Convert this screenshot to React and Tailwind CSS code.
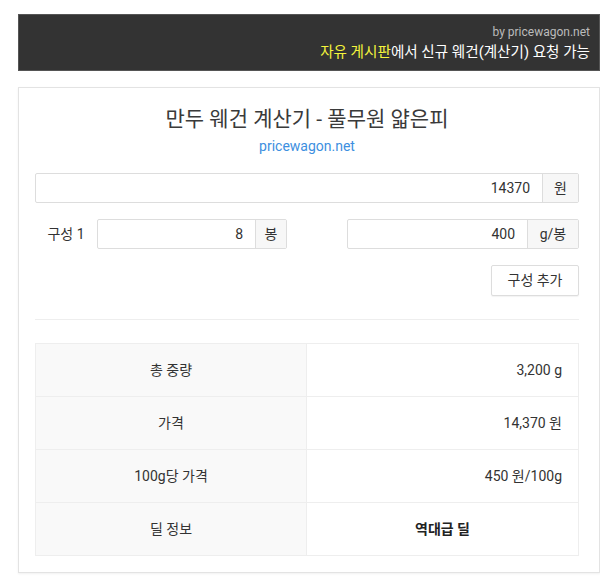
const font = { fontFamily: "Roboto, 'Noto Sans CJK KR', 'Noto Sans', sans-serif" };

function Row({ label, value, strong }) {
  return (
    <div className="flex h-[53px] border-t border-[#eeeeee] first:h-[52px] first:border-t-0">
      <div className="w-1/2 flex items-center justify-center bg-[#f9f9f9] border-r border-[#eeeeee] text-[14px] text-[#333]">
        {label}
      </div>
      <div
        className={`w-1/2 flex items-center px-4 text-[14px] ${
          strong ? "justify-center font-bold text-[#222]" : "justify-end text-[#333]"
        }`}
      >
        {value}
      </div>
    </div>
  );
}

export default function App() {
  return (
    <div className="min-h-screen bg-white pt-[14px]" style={font}>
      <div className="ml-[18px] w-[582px]">
        <header className="h-[57px] bg-[#333333] flex flex-col items-end justify-center pr-[9px] border border-[#555]">
          <div className="text-[12px] text-[#bbbbbb] leading-[18px]">by pricewagon.net</div>
          <div className="text-[14.6px] text-white leading-[22px]">
            <span className="text-[#f5f53c]">자유 게시판</span>에서 신규 웨건(계산기) 요청 가능
          </div>
        </header>

        <div className="mt-[16px] border border-[#e3e3e3] shadow-[0_1px_2px_rgba(0,0,0,0.06)] pl-4 pr-[20px] pt-[16px] pb-4">
          <h1 className="text-center text-[21px] text-[#3a3a3a] leading-[28px] mt-[1px]">
            만두 웨건 계산기 - 풀무원 얇은피
          </h1>
          <div className="text-center mt-[3px] leading-[20px]">
            <a className="text-[14px] text-[#3d8fe0]">pricewagon.net</a>
          </div>

          <div className="mt-[17px] flex h-[30px] border border-[#dddddd] rounded-[2px]">
            <div className="flex-1 flex items-center justify-end px-3 text-[14px] text-[#333]">14370</div>
            <div className="w-[36px] flex items-center justify-center bg-[#f7f7f7] border-l border-[#dddddd] text-[14px] text-[#333]">
              원
            </div>
          </div>

          <div className="mt-[16px] flex items-center h-[30px]">
            <div className="w-[62px] text-center text-[14px] text-[#333]">구성 1</div>
            <div className="w-[190px] h-full flex border border-[#dddddd] rounded-[2px]">
              <div className="flex-1 flex items-center justify-end px-3 text-[14px] text-[#333]">8</div>
              <div className="w-[31px] flex items-center justify-center bg-[#f7f7f7] border-l border-[#dddddd] text-[14px] text-[#333]">
                봉
              </div>
            </div>
            <div className="w-[60px]" />
            <div className="flex-1 h-full flex border border-[#dddddd] rounded-[2px]">
              <div className="flex-1 flex items-center justify-end px-3 text-[14px] text-[#333]">400</div>
              <div className="w-[51px] flex items-center justify-center bg-[#f7f7f7] border-l border-[#dddddd] text-[14px] text-[#333]">
                g/봉
              </div>
            </div>
          </div>

          <div className="mt-[16px] flex justify-end">
            <button className="w-[88px] h-[31px] border border-[#dddddd] rounded-[2px] bg-white text-[14px] text-[#333] shadow-[0_1px_1px_rgba(0,0,0,0.05)]">
              구성 추가
            </button>
          </div>

          <div className="mt-[23px] border-t border-[#eeeeee]" />

          <div className="mt-[23px] border border-[#eeeeee]">
            <Row label="총 중량" value="3,200 g" />
            <Row label="가격" value="14,370 원" />
            <Row label="100g당 가격" value="450 원/100g" />
            <Row label="딜 정보" value="역대급 딜" strong />
          </div>
        </div>
      </div>
    </div>
  );
}
